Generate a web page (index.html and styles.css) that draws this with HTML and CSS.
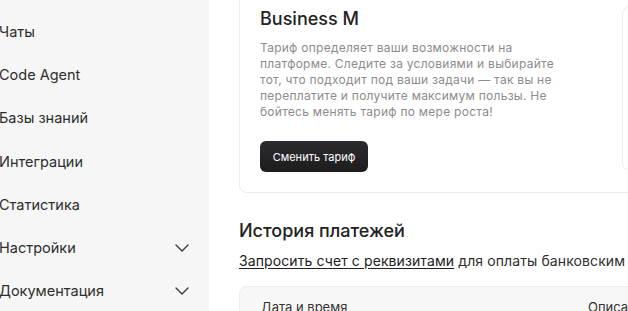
FILE: index.html
```html
<!DOCTYPE html>
<html lang="ru">
<head>
<meta charset="utf-8">
<link rel="stylesheet" href="styles.css">
</head>
<body>
<div class="app">
  <aside class="sidebar">
    <nav class="nav">
      <div class="nav-item">Чаты</div>
      <div class="nav-item">Code Agent</div>
      <div class="nav-item">Базы знаний</div>
      <div class="nav-item">Интеграции</div>
      <div class="nav-item">Статистика</div>
      <div class="nav-item">Настройки
        <svg class="chev" width="14" height="8" viewBox="0 0 14 8"><path d="M1 1l6 6 6-6" fill="none" stroke="#3a3a3a" stroke-width="1.4" stroke-linecap="round" stroke-linejoin="round"/></svg>
      </div>
      <div class="nav-item">Документация
        <svg class="chev" width="14" height="8" viewBox="0 0 14 8"><path d="M1 1l6 6 6-6" fill="none" stroke="#3a3a3a" stroke-width="1.4" stroke-linecap="round" stroke-linejoin="round"/></svg>
      </div>
    </nav>
  </aside>
  <main class="main">
    <section class="plan-card">
      <div class="plan-info">
        <h2 class="plan-title">Business M</h2>
        <p class="plan-desc">Тариф определяет ваши возможности на платформе. Следите за условиями и выбирайте тот, что подходит под ваши задачи — так вы не переплатите и получите максимум пользы. Не бойтесь менять тариф по мере роста!</p>
        <button class="btn">Сменить тариф</button>
      </div>
      <div class="plan-side"></div>
    </section>
    <h2 class="section-title">История платежей</h2>
    <p class="invoice"><a class="link" href="#">Запросить счет с реквизитами</a> для оплаты банковским переводом</p>
    <div class="table">
      <div class="thead">
        <span class="th th-date">Дата и время</span>
        <span class="th">Описание</span>
      </div>
    </div>
  </main>
</div>
</body>
</html>
```
FILE: styles.css
```css
* { box-sizing: border-box; }
html, body { margin: 0; padding: 0; overflow: hidden; background: #fff; }
body { font-family: Inter, "Noto Sans", sans-serif; color: #2b2b2b; width: 628px; height: 311px; }
.app { display: flex; height: 311px; }
.sidebar { width: 209px; flex: none; background: #f6f6f6; padding-top: 10px; }
.nav { display: flex; flex-direction: column; }
.nav-item {
  height: 43.2px; display: flex; align-items: center; justify-content: space-between;
  font-size: 14.5px; color: #2e2e2e; margin-left: -1px; padding-right: 20px;
}
.chev { display: block; }
.main { flex: none; width: 800px; padding-left: 30px; }
.plan-card {
  margin-top: -15px; width: 760px; border: 1px solid #ececec; border-radius: 8px;
  padding: 20px; display: flex; gap: 52px;
}
.plan-info { width: 310px; flex: none; padding-top: 1px; }
.plan-title { margin: 0; font-size: 18px; font-weight: 500; line-height: 24px; color: #222; }
.plan-desc {
  margin: 9px 0 0; font-size: 12px; line-height: 16px; color: #8c8c8c; letter-spacing: 0.26px; max-width: 300px;
}
.btn {
  margin-top: 21px; height: 31px; width: 108px; border: none; border-radius: 6px;
  background: linear-gradient(#2c2c30, #1d1d1f); color: #fff; font-family: inherit; font-size: 11px; padding: 0;
}
.plan-side { width: 300px; height: 165px; border: 1px solid #ececec; border-radius: 8px; }
.section-title { margin: 26px 0 0; font-size: 18px; font-weight: 500; line-height: 24px; color: #222; }
.invoice { margin: 9px 0 0; font-size: 14px; line-height: 18px; color: #2e2e2e; white-space: nowrap; letter-spacing: 0.1px; }
.link { color: #222; text-decoration: underline; text-underline-offset: 2px; }
.table { margin-top: 16px; width: 760px; border: 1px solid #ececec; border-radius: 8px; background: #f7f7f7; height: 60px; }
.thead { display: flex; padding: 12px 21px; font-size: 13px; color: #333; }
.th-date { width: 327px; }
```
